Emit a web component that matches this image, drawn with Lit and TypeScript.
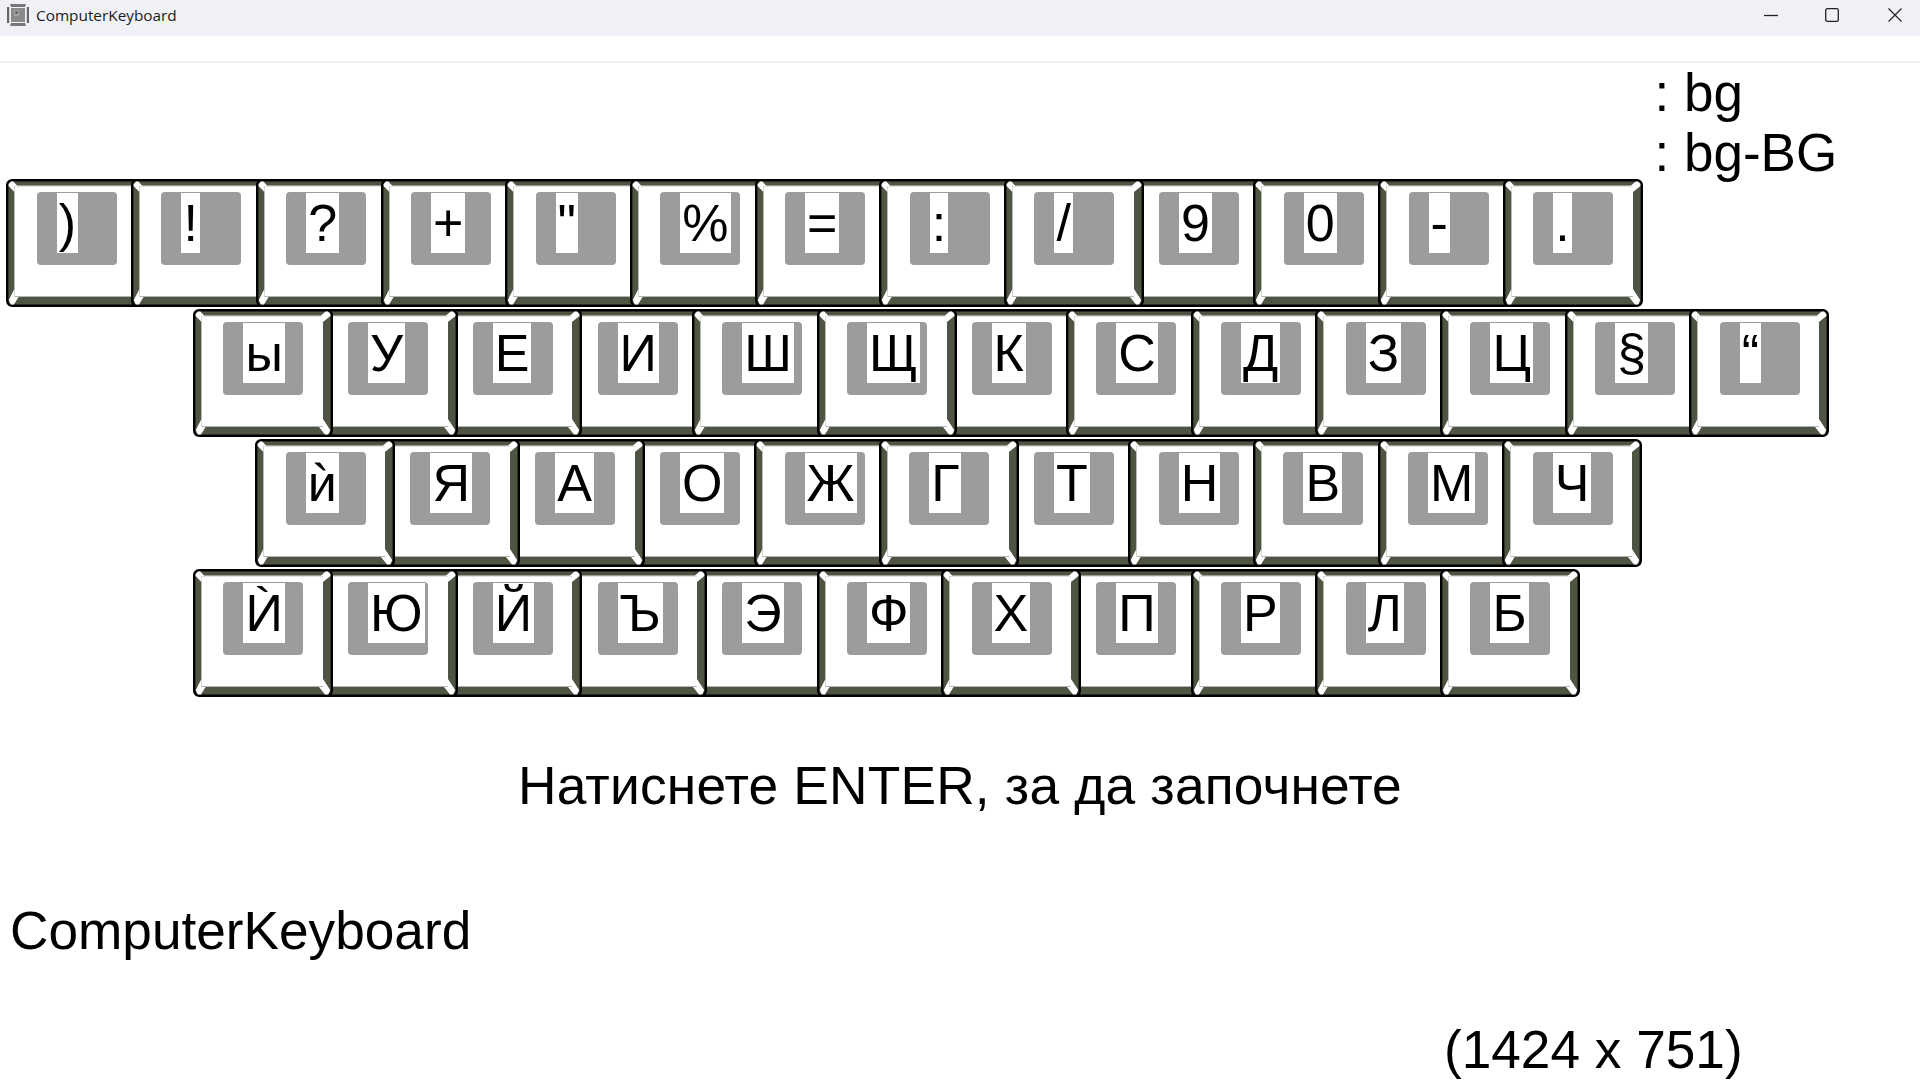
import { LitElement, html, css, svg } from "lit";
import { customElement } from "lit/decorators.js";

const ROWS: { indent: number; keys: string[]; under: number[] }[] = [
  { indent: 6.4, keys: [")", "!", "?", "+", '"', "%", "=", ":", "/", "9", "0", "-", "."], under: [9] },
  { indent: 193, keys: ["ы", "У", "Е", "И", "Ш", "Щ", "К", "С", "Д", "З", "Ц", "§", "“"], under: [1, 2, 3, 6] },
  { indent: 255.4, keys: ["ѝ", "Я", "А", "О", "Ж", "Г", "Т", "Н", "В", "М", "Ч"], under: [1, 2, 3, 6] },
  { indent: 193, keys: ["Ѝ", "Ю", "Й", "Ъ", "Э", "Ф", "Х", "П", "Р", "Л", "Б"], under: [1, 2, 3, 4, 7] },
];

const bevel = svg`
  <rect x="1.2" y="1.2" width="137.6" height="125.6" rx="5" fill="#4e5643" stroke="#000" stroke-width="2.4"/>
  <rect x="8.4" y="6.8" width="121.6" height="111.2" fill="#fff"/>
  <rect x="8.4" y="6.4" width="121.6" height="1" fill="#b4b4b4"/>
  <rect x="8.4" y="117" width="121.6" height="1" fill="#b4b4b4"/>
  <path d="M2.6 7 L2.6 5 L5 2.6 L7.4 2.6 L11.4 7 L8.4 7 L8.4 13 Z" fill="#fff"/>
  <path d="M137.4 7 L137.4 5 L135 2.6 L132.6 2.6 L127.6 7 L130 7 L130 13 Z" fill="#fff"/>
  <path d="M8.4 110 L2.8 121 L4.8 125.4 L8 125.4 L12.6 118 L8.4 118 Z" fill="#fff"/>
  <path d="M130 110 L137.2 121 L135.2 125.4 L132 125.4 L126 118 L130 118 Z" fill="#fff"/>
`;

@customElement("app-root")
export class AppRoot extends LitElement {
  static styles = css`
    :host {
      display: block;
      width: 1920px;
      height: 1080px;
      overflow: hidden;
      background: #fff;
      font-family: "Liberation Sans", Arial, sans-serif;
      color: #000;
    }
    .titlebar {
      display: flex;
      align-items: center;
      box-sizing: border-box;
      height: 36px;
      padding-bottom: 6px;
      background: #eff1f7;
    }
    .appicon {
      width: 22px;
      height: 22px;
      margin-left: 7px;
      flex: none;
    }
    .title {
      margin-left: 7px;
      font-family: "Open Sans", sans-serif;
      font-size: 15.35px;
      color: #1a1a1a;
      flex: 1;
    }
    .ctrl {
      display: flex;
      align-items: center;
      justify-content: center;
      width: 16px;
      height: 16px;
    }
    .ctrl svg {
      display: block;
    }
    .min { margin-right: 45px; }
    .max { margin-right: 47px; }
    .close { margin-right: 17px; }
    .menubar {
      height: 25px;
      border-bottom: 2px solid #f0f0f0;
      background: #fff;
    }
    .lang {
      height: 116px;
      padding-left: 1654.5px;
      font-size: 53px;
      line-height: 59.5px;
      white-space: pre;
    }
    .rows {
      display: flex;
      flex-direction: column;
      gap: 2px;
    }
    .row {
      display: flex;
    }
    .key {
      position: relative;
      flex: none;
      box-sizing: border-box;
      width: 140px;
      height: 128px;
      margin-right: -15.3px;
      padding: 13px 0 0 30.4px;
    }
    .bevel {
      position: absolute;
      left: 0;
      top: 0;
    }
    .cap {
      position: relative;
      box-sizing: border-box;
      display: flex;
      align-items: flex-start;
      width: 80px;
      height: 73px;
      padding: 1px 0 0 20px;
      background: #9c9c9c;
      border-radius: 4px;
    }
    .label {
      height: 60px;
      padding: 0 2px;
      background: #fff;
      font-size: 52px;
      line-height: 60px;
      overflow: hidden;
      white-space: pre;
    }
    .prompt {
      margin-top: 59px;
      font-size: 53.33px;
      line-height: 60px;
      letter-spacing: 0.17px;
      text-align: center;
    }
    .name {
      margin-top: 85px;
      padding-left: 10px;
      font-size: 53.2px;
      line-height: 60px;
    }
    .size {
      margin-top: 59px;
      padding-left: 1444px;
      font-size: 53.2px;
      line-height: 60px;
      white-space: pre;
    }
  `;

  private renderRow(r: { indent: number; keys: string[]; under: number[] }) {
    let z = 100;
    return html`<div class="row" style="padding-left:${r.indent}px">
      ${r.keys.map((k, i) => {
        if (i > 0) z += r.under.includes(i) ? -1 : 1;
        return html`<div class="key" style="z-index:${z}">
          <svg class="bevel" width="140" height="128" viewBox="0 0 140 128">${bevel}</svg>
          <div class="cap"><span class="label">${k}</span></div>
        </div>`;
      })}
    </div>`;
  }

  render() {
    return html`
      <div class="titlebar">
        <svg class="appicon" viewBox="0 0 22 22">
          <rect x="0" y="3" width="2.2" height="16" fill="#666"/>
          <rect x="19.8" y="3" width="2.2" height="16" fill="#666"/>
          <path d="M3 0 H19 L18 3 H4 Z" fill="#777"/>
          <path d="M4 19 H18 L19 22 H3 Z" fill="#777"/>
          <rect x="4" y="4" width="14" height="14" fill="#8a8a8a"/>
          <rect x="7" y="6" width="5" height="6" fill="#a4a4a4"/>
          <rect x="8.4" y="7.5" width="2.2" height="2.2" fill="#4a4a4a"/>
        </svg>
        <span class="title">ComputerKeyboard</span>
        <span class="ctrl min"><svg width="16" height="16" viewBox="0 0 16 16"><path d="M1 8.5H15" stroke="#222" stroke-width="1.3"/></svg></span>
        <span class="ctrl max"><svg width="16" height="16" viewBox="0 0 16 16"><rect x="1.7" y="1.7" width="12.6" height="12.6" rx="1.6" fill="none" stroke="#222" stroke-width="1.3"/></svg></span>
        <span class="ctrl close"><svg width="16" height="16" viewBox="0 0 16 16"><path d="M1.5 1.5L14.5 14.5M14.5 1.5L1.5 14.5" stroke="#222" stroke-width="1.2"/></svg></span>
      </div>
      <div class="menubar"></div>
      <div class="lang">: bg
: bg-BG</div>
      <div class="rows">${ROWS.map((r) => this.renderRow(r))}</div>
      <div class="prompt">Натиснете ENTER, за да започнете</div>
      <div class="name">ComputerKeyboard</div>
      <div class="size">(1424 x 751)</div>
    `;
  }
}
